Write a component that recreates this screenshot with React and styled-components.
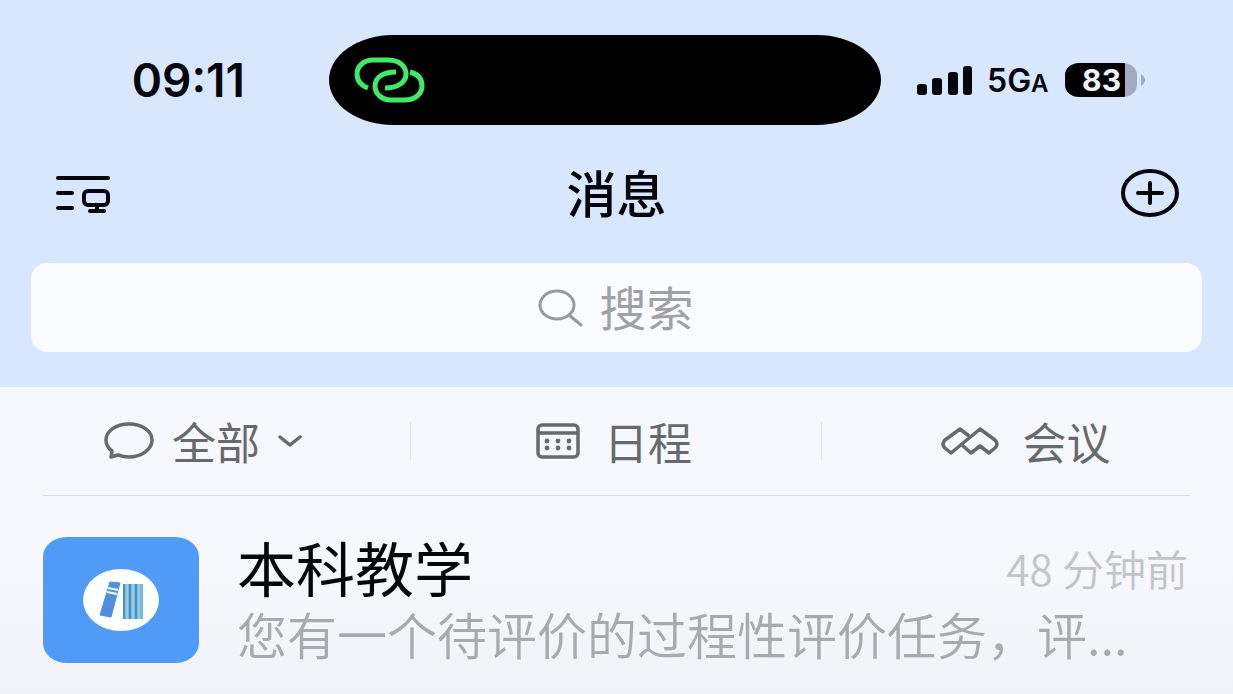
import React from "react";
import styled, { createGlobalStyle } from "styled-components";

const GlobalStyle = createGlobalStyle`
  *, *::before, *::after { box-sizing: border-box; }
  body {
    margin: 0;
    background: #f6f8fd;
    color: #04060c;
    font-family: "Noto Sans CJK SC", sans-serif;
  }
  button, input { font: inherit; color: inherit; }
  h1, h2, p { margin: 0; font-weight: 400; }
  svg { display: block; flex: none; }
`;

const Page = styled.div`
  min-height: 100vh;
  display: flex;
  flex-direction: column;
`;

const Header = styled.header`
  background: #d9e7fe;
  padding-bottom: 35px;
`;

const StatusBar = styled.div`
  display: grid;
  grid-template-columns: 329fr 552fr 352fr;
  align-items: center;
  padding-top: 35px;
  font-family: Inter, "Liberation Sans", sans-serif;
`;

const Clock = styled.time`
  justify-self: end;
  padding-right: 84px;
  font-size: 46px;
  line-height: 48px;
  font-weight: 600;
`;

const Island = styled.div`
  display: flex;
  align-items: center;
  height: 90px;
  padding-left: 24px;
  border-radius: 64px / 45px;
  background: #000;
`;

const Indicators = styled.div`
  display: flex;
  align-items: center;
  padding-left: 36px;
`;

const Network = styled.span`
  margin: 0 16px 0 14px;
  padding-top: 4px;
  font-size: 32px;
  line-height: 40px;
  font-weight: 600;

  small { font-size: 24px; }
`;

const Battery = styled.span`
  width: 72px;
  height: 34px;
  padding-left: 2px;
  border-radius: 14px / 12px;
  background: linear-gradient(to right, #000 60px, #a2abbf 60px);
  color: #eef4ff;
  font-size: 30px;
  line-height: 34px;
  font-weight: 700;
  text-align: center;
`;

const BatteryTip = styled.svg`
  margin-left: 4px;
`;

const TitleBar = styled.div`
  display: grid;
  grid-template-columns: 1fr auto 1fr;
  align-items: center;
  height: 138px;
  padding: 0 53px;
`;

const IconButton = styled.button`
  justify-self: ${({ $end }) => ($end ? "end" : "start")};
  padding: 0;
  border: 0;
  background: none;
  cursor: pointer;
`;

const Title = styled.h1`
  padding-bottom: 6px;
  font-size: 50px;
  line-height: 64px;
  font-weight: 500;
`;

const SearchBox = styled.label`
  display: flex;
  align-items: center;
  justify-content: center;
  gap: 16px;
  height: 89px;
  margin: 0 31px;
  border-radius: 16px;
  background: #f9fbff;
  color: #98999d;
  cursor: text;
`;

const SearchInput = styled.input`
  width: 96px;
  height: 64px;
  padding: 0 0 4px;
  border: 0;
  outline: 0;
  background: none;
  font-size: 47px;

  &::placeholder { color: #a0a1a5; opacity: 1; }
`;

const Tabs = styled.nav`
  display: grid;
  grid-template-columns: repeat(3, 1fr);
  align-items: center;
  height: 108px;
`;

const Tab = styled.button`
  display: flex;
  align-items: center;
  justify-content: center;
  gap: ${({ $gap }) => $gap}px;
  height: 38px;
  padding: 0 4px 0 0;
  border: 0;
  border-right: 1px solid #e2e5ea;
  background: none;
  color: #68696d;
  font-size: 44px;
  line-height: 36px;
  cursor: pointer;

  &:last-child { border-right: 0; }
`;

const Divider = styled.hr`
  height: 1px;
  margin: 0 43px;
  border: 0;
  background: #dcdfe5;
`;

const Conversations = styled.main`
  flex: 1;
  background: linear-gradient(#f6f8fd 40%, #f0f2f8);
`;

const Conversation = styled.a`
  display: flex;
  gap: 38px;
  padding: 41px 45px 31px 43px;
  color: inherit;
  text-decoration: none;
`;

const Avatar = styled.span`
  display: flex;
  flex: none;
  align-items: center;
  justify-content: center;
  width: 156px;
  height: 126px;
  border-radius: 24px / 20px;
  background: #509bf8;
`;

const Summary = styled.div`
  flex: 1;
  min-width: 0;
`;

const SummaryHead = styled.div`
  display: flex;
  align-items: center;
  justify-content: space-between;
  height: 66px;
`;

const Name = styled.h2`
  padding-bottom: 6px;
  font-size: 59px;
  line-height: 60px;
`;

const Age = styled.time`
  padding-bottom: 4px;
  color: #c3c4c9;
  font-size: 42px;
  line-height: 60px;
  font-weight: 350;
`;

const Preview = styled.p`
  color: #a9aaae;
  font-size: 50px;
  line-height: 60px;
  font-weight: 350;
  white-space: nowrap;
`;

const LinkIcon = () => (
  <svg width="72" height="46" viewBox="0 0 72 46" fill="none" stroke="#3eea68" strokeWidth="5">
    <path d="M15 31C7 28 4 23 4 17C4 9 11 3 20 3H35C46 3 53 9 53 17C53 25 45 31 32 31" />
    <path d="M43 15C29 15 22 21 22 29C22 37 29 43 38 43H52C62 43 69 37 69 29C69 22 65 17 57 15" />
  </svg>
);

const SignalIcon = () => (
  <svg width="56" height="30" viewBox="0 0 56 30" fill="#04060c">
    <rect x="0" y="19" width="10" height="11" rx="3" />
    <rect x="15" y="13" width="10" height="17" rx="3" />
    <rect x="31" y="7" width="10" height="23" rx="3" />
    <rect x="46" y="1" width="9" height="29" rx="3" />
  </svg>
);

const MenuIcon = () => (
  <svg width="58" height="40" viewBox="0 0 58 40" fill="none" stroke="#04060c" strokeWidth="4" strokeLinecap="round">
    <path d="M5 4H55M5 19H19M5 34H19M37 37H51M44 31V37" />
    <rect x="31" y="17" width="24" height="14" rx="4" />
  </svg>
);

const AddIcon = () => (
  <svg width="60" height="50" viewBox="0 0 60 50" fill="none" stroke="#04060c" strokeWidth="4" strokeLinecap="round">
    <ellipse cx="30" cy="24" rx="27" ry="22" />
    <path d="M18 24H42M30 14V34" />
  </svg>
);

const SearchIcon = () => (
  <svg width="46" height="38" viewBox="0 0 46 38" fill="none" stroke="#98999d" strokeWidth="3" strokeLinecap="round">
    <ellipse cx="19" cy="16" rx="17" ry="14" />
    <path d="M31 26L43 36" />
  </svg>
);

const ChatIcon = () => (
  <svg width="50" height="38" viewBox="0 0 50 38" fill="none" stroke="currentColor" strokeWidth="3.5" strokeLinejoin="round">
    <path d="M8 29C4 26 2 22 2 18C2 9 12 2 25 2S48 9 48 18S38 35 25 35C21 35 17 34 14 33L7 35Z" />
  </svg>
);

const ChevronIcon = () => (
  <svg width="24" height="14" viewBox="0 0 24 14" fill="none" stroke="currentColor" strokeWidth="3.5" strokeLinecap="round" strokeLinejoin="round">
    <path d="M2 3L12 11L22 3" />
  </svg>
);

const CalendarIcon = () => (
  <svg width="44" height="36" viewBox="0 0 44 36" fill="none" stroke="currentColor" strokeWidth="3.5">
    <rect x="2" y="2" width="40" height="32" rx="4" />
    <path d="M2 10H42" />
    <g fill="currentColor" stroke="none">
      <circle cx="11" cy="18" r="2.4" />
      <circle cx="22" cy="18" r="2.4" />
      <circle cx="33" cy="18" r="2.4" />
      <circle cx="11" cy="25" r="2.4" />
      <circle cx="22" cy="25" r="2.4" />
      <circle cx="33" cy="25" r="2.4" />
    </g>
  </svg>
);

const MeetingIcon = () => (
  <svg width="58" height="30" viewBox="0 0 58 30" fill="none" stroke="currentColor" strokeWidth="3.5" strokeLinejoin="round">
    <path d="M28 10L19 3L4 14Q0 18 4 22L10 27L39 3L54 14Q58 18 54 22L48 27L39 20L30 27L21 19" />
  </svg>
);

const BooksIcon = () => (
  <svg width="78" height="62" viewBox="0 0 78 62">
    <ellipse cx="39" cy="31" rx="38" ry="31" fill="#fcffff" />
    <path d="M28 13L38 14L29 48L18 46Z" fill="#4e8fe0" stroke="#4e8fe0" strokeWidth="1" strokeLinejoin="round" />
    <path d="M26 19L36 21M25 23L35 25" stroke="#fcffff" strokeWidth="2" />
    <path d="M41 15H61V50H41Z" fill="#78b8dc" />
    <path d="M42 15V50M48 15V50M54 15V50" stroke="#4c92bf" strokeWidth="2" />
    <path d="M45 15V50M51 15V50M57 15V50" stroke="#b9e0f0" strokeWidth="1" />
  </svg>
);

export default function App() {
  return (
    <Page>
      <GlobalStyle />
      <Header>
        <StatusBar>
          <Clock>09:11</Clock>
          <Island>
            <LinkIcon />
          </Island>
          <Indicators>
            <SignalIcon />
            <Network>
              5G<small>A</small>
            </Network>
            <Battery>83</Battery>
            <BatteryTip width="4" height="12" viewBox="0 0 4 12" fill="#a2abbf">
              <path d="M0 0Q4 3 4 6T0 12Z" />
            </BatteryTip>
          </Indicators>
        </StatusBar>
        <TitleBar>
          <IconButton type="button" aria-label="菜单">
            <MenuIcon />
          </IconButton>
          <Title>消息</Title>
          <IconButton type="button" aria-label="添加" $end>
            <AddIcon />
          </IconButton>
        </TitleBar>
        <SearchBox>
          <SearchIcon />
          <SearchInput type="text" aria-label="搜索" placeholder="搜索" />
        </SearchBox>
      </Header>
      <Tabs>
        <Tab type="button" $gap={18}>
          <ChatIcon />
          全部
          <ChevronIcon />
        </Tab>
        <Tab type="button" $gap={24}>
          <CalendarIcon />
          日程
        </Tab>
        <Tab type="button" $gap={24}>
          <MeetingIcon />
          会议
        </Tab>
      </Tabs>
      <Divider />
      <Conversations>
        <Conversation href="#course">
          <Avatar>
            <BooksIcon />
          </Avatar>
          <Summary>
            <SummaryHead>
              <Name>本科教学</Name>
              <Age>48 分钟前</Age>
            </SummaryHead>
            <Preview>您有一个待评价的过程性评价任务，评...</Preview>
          </Summary>
        </Conversation>
      </Conversations>
    </Page>
  );
}
